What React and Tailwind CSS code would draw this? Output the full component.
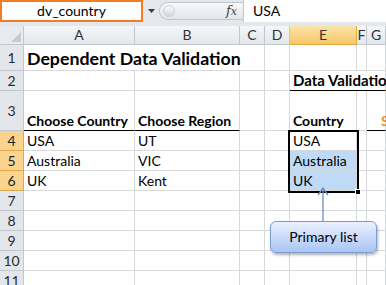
import React from "react";

const cols = [
  { w: "w-[24px]", label: "" },
  { w: "w-[111px]", label: "A" },
  { w: "w-[105px]", label: "B" },
  { w: "w-[25px]", label: "C" },
  { w: "w-[25px]", label: "D" },
  { w: "w-[67px]", label: "E", sel: true },
  { w: "w-[10px]", label: "F" },
  { w: "w-[19px]", label: "G" },
];

const GRID = "border-[#d6d8da]";

function Cell({ w, h, children, noRight, under, bg, bold, size, color, left }) {
  return (
    <div
      className={`${w} ${h} shrink-0 relative flex items-end border-b ${
        noRight ? "" : "border-r"
      } ${under ? "border-b-black" : ""} ${GRID} ${bg || ""}`}
    >
      {children ? (
        <span
          className={`absolute ${left || "left-[3px]"} bottom-[2px] whitespace-nowrap leading-none z-10 ${
            bold ? "font-bold" : ""
          } ${size || "text-[14px]"} ${color || "text-black"}`}
        >
          {children}
        </span>
      ) : null}
    </div>
  );
}

function RowHead({ h, n, sel }) {
  return (
    <div
      className={`w-[24px] ${h} shrink-0 flex items-center justify-center border-r border-b text-[14px] ${
        sel
          ? "bg-[#f8d48e] border-[#e2a845] text-[#1f1f1f]"
          : "bg-[#e3e6ea] border-[#c3c8ce] text-[#2b2b2b]"
      }`}
    >
      {n}
    </div>
  );
}

export default function App() {
  const rows = [
    {
      n: 1,
      h: "h-[26px]",
      cells: [
        { c: "Dependent Data Validation", bold: true, size: "text-[17.75px]", noRight: true },
        { noRight: true },
        {},
        {},
        {},
        {},
        {},
      ],
    },
    {
      n: 2,
      h: "h-[20px]",
      cells: [{}, {}, {}, {}, { c: "Data Validation", bold: true, size: "text-[15px]", under: true, noRight: true }, { under: true, noRight: true }, { under: true }],
    },
    {
      n: 3,
      h: "h-[40px]",
      cells: [
        { c: "Choose Country", bold: true, under: true },
        { c: "Choose Region", bold: true, under: true },
        {},
        {},
        { c: "Country", bold: true, under: true },
        {},
        { c: "S", bold: true, under: true, color: "text-[#e2913b]", left: "left-[14px]" },
      ],
    },
    { n: 4, h: "h-[20px]", sel: true, cells: [{ c: "USA" }, { c: "UT" }, {}, {}, { c: "USA" }, {}, {}] },
    { n: 5, h: "h-[20px]", sel: true, cells: [{ c: "Australia" }, { c: "VIC" }, {}, {}, { c: "Australia", bg: "bg-[#bfdaf7]" }, {}, {}] },
    { n: 6, h: "h-[20px]", sel: true, cells: [{ c: "UK" }, { c: "Kent" }, {}, {}, { c: "UK", bg: "bg-[#bfdaf7]" }, {}, {}] },
    { n: 7, h: "h-[20px]", cells: [{}, {}, {}, {}, {}, {}, {}] },
    { n: 8, h: "h-[20px]", cells: [{}, {}, {}, {}, {}, {}, {}] },
    { n: 9, h: "h-[20px]", cells: [{}, {}, {}, {}, {}, {}, {}] },
    { n: 10, h: "h-[20px]", cells: [{}, {}, {}, {}, {}, {}, {}] },
    { n: 11, h: "h-[20px]", cells: [{}, {}, {}, {}, {}, {}, {}] },
  ];

  return (
    <div className="w-[386px] h-[285px] overflow-hidden bg-white relative font-['Lato',sans-serif] text-black">
      {/* formula bar */}
      <div className="flex h-[22px] bg-[#e4e8ed]">
        <div className="w-[143px] shrink-0 border-2 border-[#f37d22] bg-white flex items-center justify-center text-[14px] leading-none pb-[1px]">
          dv_country
        </div>
        <div className="w-[16px] shrink-0 flex items-center justify-center">
          <svg width="7" height="4" viewBox="0 0 7 4">
            <path d="M0 0 L7 0 L3.5 4 Z" fill="#3c3c3c" />
          </svg>
        </div>
        <div className="w-[84px] shrink-0 flex items-center">
          <div className="h-[18px] w-full rounded-l-full border border-r-0 border-[#c0c6cd] bg-gradient-to-b from-[#f7f8fa] to-[#e2e6eb] flex items-center justify-between pl-[3px] pr-[6px]">
            <div className="w-[12px] h-[12px] rounded-full bg-gradient-to-b from-[#fbfcfd] to-[#d3d8de] border border-[#cdd2d8]" />
            <span className="font-['DejaVu_Serif',serif] italic text-[13px] leading-none text-[#444] pb-[1px]">
              f<span className="text-[11px]">x</span>
            </span>
          </div>
        </div>
        <div className="flex-1 bg-white border-l border-[#c0c6cd] flex items-center pl-[9px] text-[14px] leading-none pb-[1px]">
          USA
        </div>
      </div>
      <div className="h-[4px] bg-[#e4e8ed]" />

      {/* column headers */}
      <div className="flex h-[19px]">
        {cols.map((c, i) =>
          i === 0 ? (
            <div key={i} className="w-[24px] shrink-0 relative border-r border-b border-[#c3c8ce] bg-[#e8ebee]">
              <svg className="absolute right-[2px] bottom-[2px]" width="10" height="10" viewBox="0 0 10 10">
                <path d="M10 0 L10 10 L0 10 Z" fill="#c6cbd1" />
              </svg>
            </div>
          ) : (
            <div
              key={i}
              className={`${c.w} ${i === 7 ? "grow" : "shrink-0"} flex items-center justify-center border-r border-b text-[14px] leading-none ${
                c.sel
                  ? "bg-gradient-to-b from-[#fbe4a6] to-[#f5c868] border-[#e2a845] text-[#333]"
                  : "bg-gradient-to-b from-[#f5f7f9] to-[#e3e7eb] border-[#c3c8ce] text-[#333]"
              }`}
            >
              {c.label}
            </div>
          )
        )}
      </div>

      {/* rows */}
      {rows.map((r) => (
        <div key={r.n} className="flex">
          <RowHead h={r.h} n={r.n} sel={r.sel} />
          {r.cells.map((cell, j) => (
            <Cell
              key={j}
              w={j === 6 ? "grow" : cols[j + 1].w}
              h={r.h}
              noRight={cell.noRight}
              under={cell.under}
              bg={cell.bg}
              bold={cell.bold}
              size={cell.size}
              color={cell.color}
              left={cell.left}
            >
              {cell.c}
            </Cell>
          ))}
        </div>
      ))}

      {/* selection border */}
      <div className="absolute left-[288px] top-[130px] w-[71px] h-[63px] border-[2px] border-black z-20 pointer-events-none" />
      <div className="absolute left-[355px] top-[189px] w-[6px] h-[6px] bg-black border border-white z-30" />

      {/* arrow */}
      <svg className="absolute left-[316px] top-[186px] z-20" width="14" height="37" viewBox="0 0 14 37">
        <line x1="7" y1="2" x2="7" y2="36" stroke="#6b8cc4" strokeWidth="1.3" />
        <path d="M2 9 L7 2 L12 9" fill="none" stroke="#6b8cc4" strokeWidth="1.3" />
      </svg>

      {/* callout */}
      <div className="absolute left-[270px] top-[221px] w-[107px] h-[32px] rounded-[6px] border border-[#7b9bd2] bg-gradient-to-b from-[#eaf1fe] to-[#aac5f3] shadow-[1px_2px_3px_rgba(0,0,0,0.3)] flex items-center justify-center text-[14px] leading-none z-20 pb-[1px]">
        Primary list
      </div>
    </div>
  );
}
